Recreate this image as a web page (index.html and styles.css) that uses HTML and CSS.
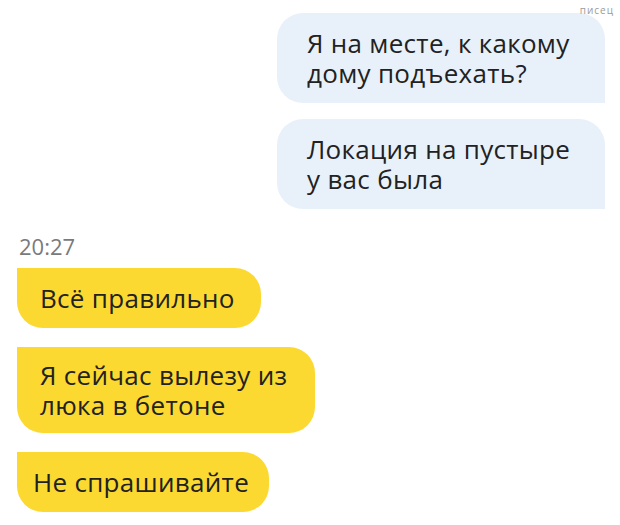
FILE: index.html
```html
<!DOCTYPE html>
<html lang="ru">
<head>
    <meta charset="UTF-8">
    <meta name="viewport" content="width=device-width, initial-scale=1.0">
    <title>Чат</title>
    <link rel="stylesheet" href="styles.css">
</head>
<body>
    <div class="watermark">писец</div>
    <main class="chat">
        <div class="msg out">Я на месте, к какому дому подъехать?</div>
        <div class="msg out">Локация на пустыре у вас была</div>

        <div class="time">20:27</div>

        <div class="msg in first">Всё правильно</div>
        <div class="msg in wrap">Я сейчас вылезу из люка в бетоне</div>
        <div class="msg in last">Не спрашивайте</div>
    </main>
</body>
</html>
```

FILE: styles.css
```css
body {
    margin: 0;
    padding: 0;
    background-color: #fff;
    font-family: "Open Sans", "Noto Sans", sans-serif;
    color: #222;
}

.watermark {
    position: absolute;
    top: 3px;
    right: 6px;
    font-size: 10px;
    letter-spacing: 1px;
    color: #9a9a9a;
}

.chat {
    display: flex;
    flex-direction: column;
    padding: 13px 15px 0 17px;
}

.msg {
    font-size: 26px;
    line-height: 30px;
    letter-spacing: 0.3px;
    padding: 15px 26px 15px 23px;
    box-sizing: border-box;
}

.out {
    align-self: flex-end;
    width: 328px;
    padding-left: 30px;
    padding-right: 20px;
    background-color: #e8f1fa;
    border-radius: 26px 26px 0 26px;
    margin-bottom: 16px;
}

.in {
    align-self: flex-start;
    background-color: #fcd931;
    border-radius: 0 26px 26px 26px;
    margin-bottom: 19px;
}

.wrap {
    width: 298px;
    padding-top: 13px;
    padding-bottom: 13px;
}

.last {
    padding-left: 16px;
    padding-right: 20px;
}

.time {
    font-size: 22px;
    line-height: 30px;
    color: #7a7a7a;
    margin: 6px 0 7px 2px;
}
```
